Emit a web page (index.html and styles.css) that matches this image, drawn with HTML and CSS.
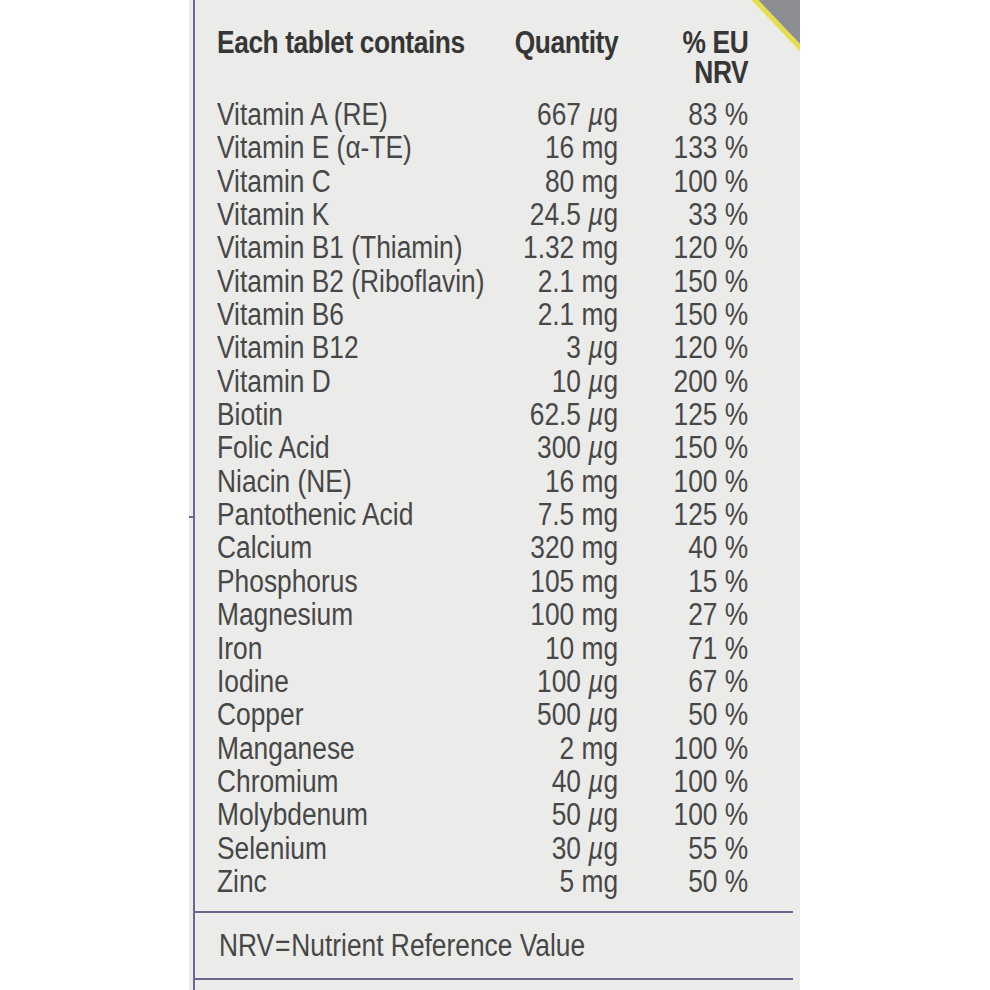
FILE: index.html
```html
<!DOCTYPE html>
<html lang="en">
<head>
<meta charset="utf-8">
<title>Each tablet contains</title>
<link rel="stylesheet" href="styles.css">
</head>
<body>
<div class="panel">
  <svg class="corner" width="50" height="56" viewBox="0 0 50 56" aria-hidden="true">
    <polygon points="8,0 50,0 50,44" fill="#8d8e93"/>
    <line x1="3" y1="-2" x2="52" y2="50" stroke="#e6df4c" stroke-width="5"/>
  </svg>
  <div class="frame">
    <div class="table">
      <div class="head">Each tablet contains</div>
      <div class="head num">Quantity</div>
      <div class="head num">% EU<br>NRV</div>
    </div>
    <div class="table rows">
      <div>Vitamin A (RE)</div><div class="num">667 <span class="mu">µ</span>g</div><div class="num">83 %</div>
      <div>Vitamin E (α-TE)</div><div class="num">16 mg</div><div class="num">133 %</div>
      <div>Vitamin C</div><div class="num">80 mg</div><div class="num">100 %</div>
      <div>Vitamin K</div><div class="num">24.5 <span class="mu">µ</span>g</div><div class="num">33 %</div>
      <div>Vitamin B1 (Thiamin)</div><div class="num">1.32 mg</div><div class="num">120 %</div>
      <div>Vitamin B2 (Riboflavin)</div><div class="num">2.1 mg</div><div class="num">150 %</div>
      <div>Vitamin B6</div><div class="num">2.1 mg</div><div class="num">150 %</div>
      <div>Vitamin B12</div><div class="num">3 <span class="mu">µ</span>g</div><div class="num">120 %</div>
      <div>Vitamin D</div><div class="num">10 <span class="mu">µ</span>g</div><div class="num">200 %</div>
      <div>Biotin</div><div class="num">62.5 <span class="mu">µ</span>g</div><div class="num">125 %</div>
      <div>Folic Acid</div><div class="num">300 <span class="mu">µ</span>g</div><div class="num">150 %</div>
      <div>Niacin (NE)</div><div class="num">16 mg</div><div class="num">100 %</div>
      <div>Pantothenic Acid</div><div class="num">7.5 mg</div><div class="num">125 %</div>
      <div>Calcium</div><div class="num">320 mg</div><div class="num">40 %</div>
      <div>Phosphorus</div><div class="num">105 mg</div><div class="num">15 %</div>
      <div>Magnesium</div><div class="num">100 mg</div><div class="num">27 %</div>
      <div>Iron</div><div class="num">10 mg</div><div class="num">71 %</div>
      <div>Iodine</div><div class="num">100 <span class="mu">µ</span>g</div><div class="num">67 %</div>
      <div>Copper</div><div class="num">500 <span class="mu">µ</span>g</div><div class="num">50 %</div>
      <div>Manganese</div><div class="num">2 mg</div><div class="num">100 %</div>
      <div>Chromium</div><div class="num">40 <span class="mu">µ</span>g</div><div class="num">100 %</div>
      <div>Molybdenum</div><div class="num">50 <span class="mu">µ</span>g</div><div class="num">100 %</div>
      <div>Selenium</div><div class="num">30 <span class="mu">µ</span>g</div><div class="num">55 %</div>
      <div>Zinc</div><div class="num">5 mg</div><div class="num">50 %</div>
    </div>
    <div class="footer"><span class="footer-text">NRV<span class="eq">=</span>Nutrient Reference Value</span></div>
  </div>
</div>
</body>
</html>
```
FILE: styles.css
```css
html, body {
  margin: 0;
  padding: 0;
  background: #ffffff;
}
body {
  font-family: "Liberation Sans", Arial, sans-serif;
  color: #474747;
}
.panel {
  position: relative;
  margin-left: 189px;
  width: 611px;
  height: 990px;
  box-sizing: border-box;
  padding-left: 4px;
  background: #ebebe9;
  overflow: hidden;
}
.corner {
  position: absolute;
  top: 0;
  right: 0;
}
.frame {
  position: relative;
  height: 100%;
  border-left: 2px solid #6d6795;
  padding-top: 28px;
  box-sizing: border-box;
}
.frame::before {
  content: "";
  position: absolute;
  left: -8px;
  top: 516px;
  width: 7px;
  height: 2px;
  background: #6d6795;
}
/* condensed face: Liberation Sans narrowed to Arial-Narrow proportions */
.table {
  display: grid;
  grid-template-columns: 331px 141px 153px;
  width: 625px;
  margin-left: 22px;
  font-size: 31px;
  white-space: nowrap;
  transform: scaleX(0.85);
  transform-origin: left center;
}
.head {
  font-weight: bold;
  line-height: 30px;
  letter-spacing: -0.5px;
  color: #363636;
}
.rows {
  margin-top: 10px;
  line-height: 33.35px;
}
.num {
  text-align: right;
}
.mu {
  font-style: italic;
}
.footer {
  margin-top: 13px;
  margin-right: 7px;
  border-top: 2px solid #6a6589;
  border-bottom: 2px solid #6a6589;
  padding: 16px 0 15px 24px;
  font-size: 31px;
  line-height: 33.35px;
  white-space: nowrap;
}
.footer-text {
  display: inline-block;
  transform: scaleX(0.85);
  transform-origin: left center;
}
.eq {
  margin: 0 1px;
}
```
